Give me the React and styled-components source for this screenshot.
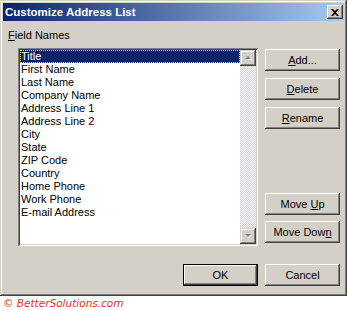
import React from "react";
import styled, { createGlobalStyle } from "styled-components";

const GlobalStyle = createGlobalStyle`
  html, body {
    margin: 0;
    padding: 0;
    background: #fff;
  }
  body {
    font-family: "Liberation Sans", Arial, sans-serif;
    font-size: 11px;
    color: #000;
  }
`;

const Dialog = styled.div`
  width: 347px;
  height: 296px;
  box-sizing: border-box;
  padding: 3px;
  background: #d4d0c8;
  display: flex;
  flex-direction: column;
  box-shadow: inset -1px -1px #404040, inset 1px 1px #d4d0c8,
    inset -2px -2px #808080, inset 2px 2px #fff;
`;

const TitleBar = styled.div`
  height: 18px;
  display: flex;
  align-items: center;
  justify-content: space-between;
  padding: 0 1px 0 2px;
  background: linear-gradient(to right, #0a246a, #a6caf0);
`;

const Title = styled.span`
  color: #fff;
  font-weight: bold;
  font-size: 11.5px;
`;

const CloseButton = styled.div`
  width: 16px;
  height: 14px;
  background: #d4d0c8;
  display: flex;
  align-items: center;
  justify-content: center;
  box-shadow: inset -1px -1px #404040, inset 1px 1px #fff,
    inset -2px -2px #808080;
`;

const Body = styled.div`
  flex: 1;
  padding: 8px 0 0 5px;
`;

const Label = styled.div`
  line-height: 13px;
  margin-bottom: 6px;
`;

const Grid = styled.div`
  margin-left: 10px;
  display: grid;
  grid-template-columns: 240px 75px;
  column-gap: 7px;
  row-gap: 18px;
`;

const ListBox = styled.div`
  height: 198px;
  box-sizing: border-box;
  padding: 2px;
  display: flex;
  background: #fff;
  box-shadow: inset 1px 1px #808080, inset -1px -1px #fff,
    inset 2px 2px #404040, inset -2px -2px #d4d0c8;
`;

const Items = styled.div`
  flex: 1;
`;

const Item = styled.div`
  height: 13px;
  line-height: 13px;
  padding-left: 1px;
  white-space: nowrap;
  background: ${(p) => (p.selected ? "#0a246a" : "transparent")};
  color: ${(p) => (p.selected ? "#fff" : "#000")};
  outline: ${(p) => (p.selected ? "1px dotted #e8dc7a" : "none")};
  outline-offset: -1px;
`;

const ScrollBar = styled.div`
  width: 16px;
  display: flex;
  flex-direction: column;
  justify-content: space-between;
  background-color: #fff;
  background-image: conic-gradient(#d4d0c8 25%, #fff 0 50%, #d4d0c8 0 75%, #fff 0);
  background-size: 2px 2px;
`;

const ArrowButton = styled.div`
  width: 16px;
  height: 16px;
  background: #d4d0c8;
  display: flex;
  align-items: center;
  justify-content: center;
  box-shadow: inset -1px -1px #404040, inset 1px 1px #d4d0c8,
    inset -2px -2px #808080, inset 2px 2px #fff;
`;

const ButtonColumn = styled.div`
  display: flex;
  flex-direction: column;
  justify-content: space-between;
  padding: 1px 0 3px;
`;

const ButtonGroup = styled.div`
  display: flex;
  flex-direction: column;
  gap: ${(p) => p.gap}px;
`;

const Button = styled.div`
  width: 75px;
  height: 22px;
  box-sizing: border-box;
  display: flex;
  align-items: center;
  justify-content: center;
  background: #d4d0c8;
  justify-self: ${(p) => (p.end ? "end" : "start")};
  ${(p) =>
    p.default
      ? `border: 1px solid #000;
  box-shadow: inset -1px -1px #404040, inset 1px 1px #fff,
    inset -2px -2px #808080;`
      : `box-shadow: inset -1px -1px #404040, inset 1px 1px #fff,
    inset -2px -2px #808080;`}
`;

const Footer = styled.div`
  height: 14px;
  line-height: 14px;
  padding-left: 3px;
  font-family: "DejaVu Sans", Verdana, sans-serif;
  font-size: 10.5px;
  font-style: italic;
  color: #e8302c;
`;

const fields = [
  "Title",
  "First Name",
  "Last Name",
  "Company Name",
  "Address Line 1",
  "Address Line 2",
  "City",
  "State",
  "ZIP Code",
  "Country",
  "Home Phone",
  "Work Phone",
  "E-mail Address",
];

const Arrow = ({ up }) => (
  <svg width="7" height="5" viewBox="0 0 7 5">
    <path
      d={up ? "M4 1 L7 4 L1 4 Z" : "M1 1 L7 1 L4 4 Z"}
      fill="#fff"
    />
    <path d={up ? "M3 0 L6 3 L0 3 Z" : "M0 0 L6 0 L3 3 Z"} fill="#808080" />
  </svg>
);

const App = () => (
  <>
    <GlobalStyle />
    <Dialog>
      <TitleBar>
        <Title>Customize Address List</Title>
        <CloseButton>
          <svg width="8" height="7" viewBox="0 0 8 7">
            <path
              d="M0 0 H2 L4 2 L6 0 H8 L5 3.5 L8 7 H6 L4 5 L2 7 H0 L3 3.5 Z"
              fill="#000"
            />
          </svg>
        </CloseButton>
      </TitleBar>
      <Body>
        <Label>
          <u>F</u>ield Names
        </Label>
        <Grid>
          <ListBox>
            <Items>
              {fields.map((f, i) => (
                <Item key={f} selected={i === 0}>
                  {f}
                </Item>
              ))}
            </Items>
            <ScrollBar>
              <ArrowButton>
                <Arrow up />
              </ArrowButton>
              <ArrowButton>
                <Arrow />
              </ArrowButton>
            </ScrollBar>
          </ListBox>
          <ButtonColumn>
            <ButtonGroup gap={7}>
              <Button>
                <span>
                  <u>A</u>dd...
                </span>
              </Button>
              <Button>
                <span>
                  <u>D</u>elete
                </span>
              </Button>
              <Button>
                <span>
                  <u>R</u>ename
                </span>
              </Button>
            </ButtonGroup>
            <ButtonGroup gap={6}>
              <Button>
                <span>
                  Move <u>U</u>p
                </span>
              </Button>
              <Button>
                <span>
                  Move Dow<u>n</u>
                </span>
              </Button>
            </ButtonGroup>
          </ButtonColumn>
          <Button default end>
            OK
          </Button>
          <Button>Cancel</Button>
        </Grid>
      </Body>
    </Dialog>
    <Footer>© BetterSolutions.com</Footer>
  </>
);

export default App;
